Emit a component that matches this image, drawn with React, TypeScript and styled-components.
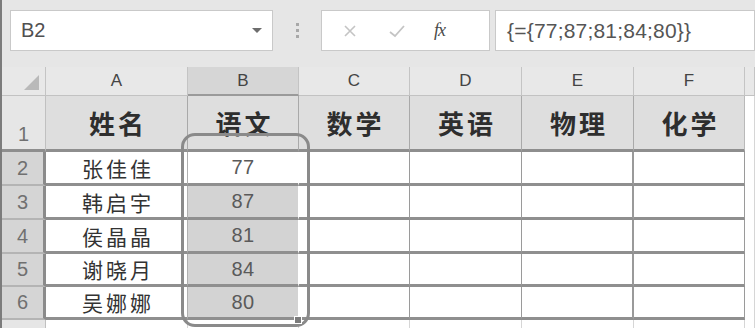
import styled, { createGlobalStyle } from "styled-components";

const GlobalStyle = createGlobalStyle`
  body {
    margin: 0;
    background: #e6e6e6;
  }
`

const LATIN = `"Liberation Sans", Arial, "Noto Sans CJK SC", sans-serif`;
const CJK = `"Noto Sans CJK SC", "Liberation Sans", sans-serif`;

const Page = styled.div`
  width: 755px;
  height: 328px;
  overflow: hidden;
  box-sizing: border-box;
  border-left: 2px solid #7c7c7c;
  background: #e6e6e6;
  font-family: ${LATIN};
`

const Toolbar = styled.div`
  height: 67px;
  box-sizing: border-box;
  padding: 10px 0 0 8px;
  display: flex;
  align-items: flex-start;
`

const Field = styled.div<{ $width?: number }>`
  height: 41px;
  box-sizing: border-box;
  background: #fff;
  border: 1px solid #c9c9c9;
  display: flex;
  align-items: center;
  ${(p) => (p.$width ? `width: ${p.$width}px;` : "flex: 1;")}
`

const NameText = styled.span`
  flex: 1;
  padding-left: 10px;
  font-size: 20px;
  color: #505050;
`

const Caret = styled.span`
  width: 0;
  height: 0;
  margin-right: 10px;
  border-left: 5px solid transparent;
  border-right: 5px solid transparent;
  border-top: 5px solid #6d6d6d;
`

const Dots = styled.div`
  width: 48px;
  height: 41px;
  display: flex;
  flex-direction: column;
  align-items: center;
  justify-content: center;
  gap: 3px;

  span {
    width: 3px;
    height: 3px;
    background: #a8a8a8;
  }
`

const IconSlot = styled.span<{ $left: number }>`
  margin-left: ${(p) => p.$left}px;
  display: flex;
  align-items: center;
`

const Fx = styled.span`
  margin-left: 28px;
  font-family: "Liberation Serif", serif;
  font-style: italic;
  font-size: 18px;
  color: #4a4a4a;
  letter-spacing: -1px;
`

const FormulaText = styled.span`
  padding-left: 11px;
  font-size: 21px;
  color: #555;
  letter-spacing: 0.2px;
`

const Sheet = styled.div`
  position: relative;
  display: grid;
  grid-template-columns: 44px 142px 111px 111px 112px 112px 111px 1fr;
  grid-template-rows: 29px 56px 34px 34px 34px 33px 33px 20px;
`

const ColHead = styled.div<{ $active?: boolean }>`
  box-sizing: border-box;
  background: ${(p) => (p.$active ? "#d6d6d6" : "#e8e8e8")};
  border-right: 1px solid #c4c4c4;
  border-bottom: ${(p) => (p.$active ? "2px solid #9a9a9a" : "1px solid #c2c2c2")};
  display: flex;
  align-items: center;
  justify-content: center;
  font-size: 17px;
  color: #444;
`

const Corner = styled(ColHead)`
  position: relative;
  justify-content: flex-end;
  align-items: flex-end;
  padding: 0 6px 5px 0;
`

const Triangle = styled.span`
  width: 0;
  height: 0;
  border-left: 15px solid transparent;
  border-bottom: 15px solid #b9b9b9;
`

const RowHead = styled.div<{ $active?: boolean; $tall?: boolean }>`
  box-sizing: border-box;
  background: ${(p) => (p.$active ? "#d5d5d5" : "#e6e6e6")};
  border-right: ${(p) => (p.$active ? "3px solid #8b8b8b" : "1px solid #c0c0c0")};
  border-bottom: ${(p) => (p.$active ? "2px solid #b4b4b4" : "3px solid #8e8e8e")};
  display: flex;
  align-items: ${(p) => (p.$tall ? "flex-end" : "center")};
  justify-content: center;
  padding-bottom: ${(p) => (p.$tall ? "3px" : "0")};
  font-size: 20px;
  color: #707070;
`

const TitleCell = styled.div<{ $last?: boolean }>`
  box-sizing: border-box;
  background: #dedede;
  border-right: 1px solid ${(p) => (p.$last ? "#b9b9b9" : "#a9a9a9")};
  border-bottom: 3px solid #8e8e8e;
  display: flex;
  align-items: center;
  justify-content: center;
  font-family: ${CJK};
  font-size: 26px;
  font-weight: 700;
  letter-spacing: 3px;
  padding-left: 3px;
  color: #2e2e2e;
`

const Cell = styled.div<{ $fill?: string; $edge?: string; $thick?: boolean }>`
  box-sizing: border-box;
  background: ${(p) => p.$fill || "#fff"};
  border-right: ${(p) => (p.$thick ? "2px" : "1px")} solid ${(p) => p.$edge || "#9a9a9a"};
  border-bottom: 3px solid #8f8f8f;
  display: flex;
  align-items: center;
  justify-content: center;
`

const Name = styled.span`
  font-family: ${CJK};
  font-size: 21px;
  letter-spacing: 3px;
  padding-left: 3px;
  color: #333;
`

const Score = styled.span`
  font-size: 20px;
  letter-spacing: 0.5px;
  color: #5a5a5a;
`

const Ring = styled.div`
  position: absolute;
  left: 179px;
  top: 66px;
  width: 129px;
  height: 194px;
  box-sizing: border-box;
  border: 3px solid #8a8a8a;
  border-radius: 14px;
  pointer-events: none;
`

const Handle = styled.div`
  position: absolute;
  left: 292px;
  top: 249px;
  width: 6px;
  height: 6px;
  background: #7b7b7b;
  border: 1px solid #fff;
`

const Tail = styled.div`
  background: #fff;
  border-right: 1px solid #d6d6d6;
`

const columns = ["A", "B", "C", "D", "E", "F"];
const titles = ["姓名", "语文", "数学", "英语", "物理", "化学"];
const students = [
  { name: "张佳佳", score: 77 },
  { name: "韩启宇", score: 87 },
  { name: "侯晶晶", score: 81 },
  { name: "谢晓月", score: 84 },
  { name: "吴娜娜", score: 80 },
];

function App() {
  return (
    <Page>
      <GlobalStyle />
      <Toolbar>
        <Field $width={263}>
          <NameText>B2</NameText>
          <Caret />
        </Field>
        <Dots>
          <span />
          <span />
          <span />
        </Dots>
        <Field $width={169}>
          <IconSlot $left={20}>
            <svg width="16" height="16" viewBox="0 0 16 16">
              <path d="M3 3 L13 13 M13 3 L3 13" stroke="#c4c4c4" strokeWidth="1.6" fill="none" />
            </svg>
          </IconSlot>
          <IconSlot $left={30}>
            <svg width="18" height="16" viewBox="0 0 18 16">
              <path d="M2 9 L7 13 L16 3" stroke="#c4c4c4" strokeWidth="1.8" fill="none" />
            </svg>
          </IconSlot>
          <Fx>fx</Fx>
        </Field>
        <Field style={{ marginLeft: 5 }}>
          <FormulaText>{"{={77;87;81;84;80}}"}</FormulaText>
        </Field>
      </Toolbar>

      <Sheet>
        <Corner>
          <Triangle />
        </Corner>
        {columns.map((c) => (
          <ColHead key={c} $active={c === "B"}>
            {c}
          </ColHead>
        ))}
        <ColHead />

        <RowHead $tall>1</RowHead>
        {titles.map((t, i) => (
          <TitleCell key={t} $last={i === titles.length - 1}>
            {t}
          </TitleCell>
        ))}
        <Tail />

        {students.map((s, i) => (
          <>
            <RowHead key={`h${i}`} $active>
              {i + 2}
            </RowHead>
            <Cell key={`a${i}`} $edge="#b0b0b0">
              <Name>{s.name}</Name>
            </Cell>
            <Cell key={`b${i}`} $fill={i === 0 ? "#fff" : "#d3d3d3"} $edge="#fff">
              <Score>{s.score}</Score>
            </Cell>
            <Cell key={`c${i}`} />
            <Cell key={`d${i}`} />
            <Cell key={`e${i}`} $thick />
            <Cell key={`f${i}`} />
            <Tail key={`t${i}`} />
          </>
        ))}

        <RowHead />
        <Tail />
        <Tail />
        <Tail />
        <Tail />
        <Tail />
        <Tail />
        <Tail />

        <Ring />
        <Handle />
      </Sheet>
    </Page>
  );
}

export default App;
